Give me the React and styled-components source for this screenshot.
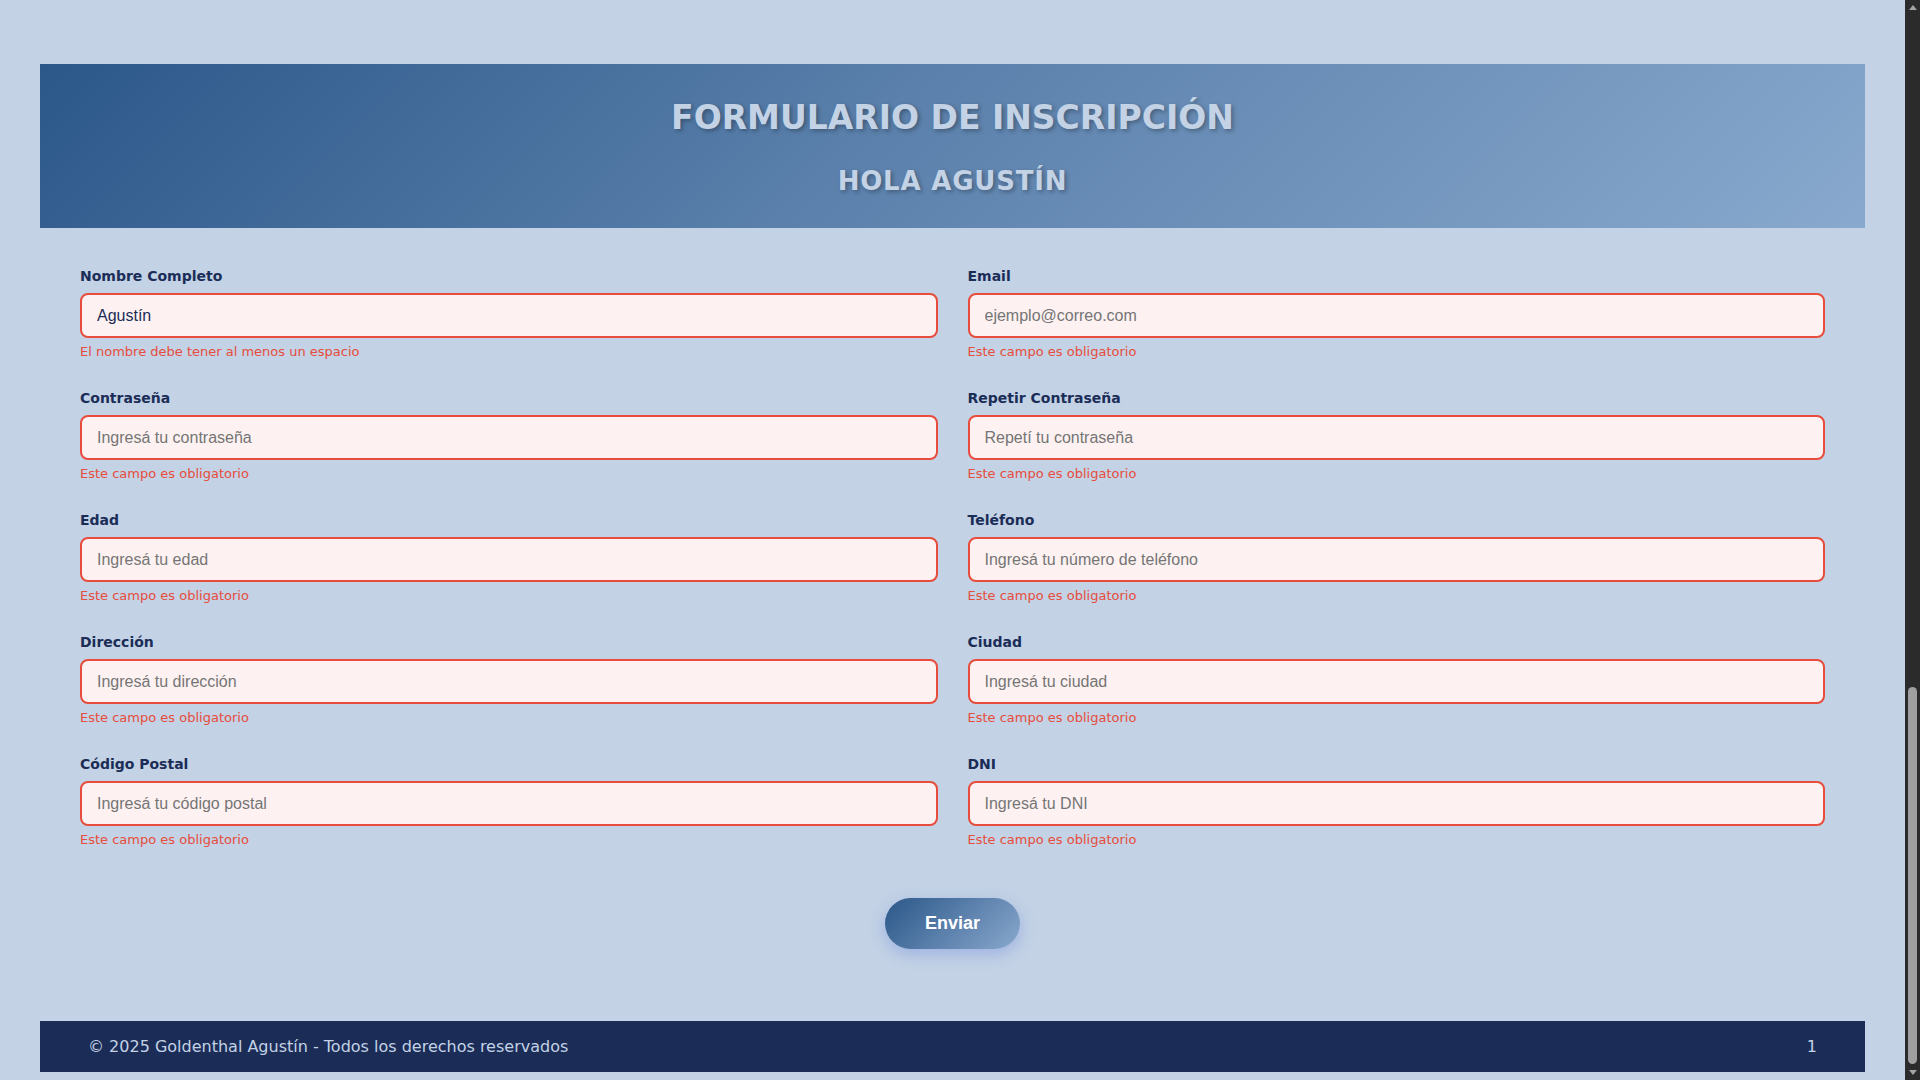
import React, { useState } from "react";
import styled, { createGlobalStyle } from "styled-components";

const GlobalStyle = createGlobalStyle`
  body {
    margin: 0;
    background: #c3d2e5;
    font-family: "DejaVu Sans", Verdana, sans-serif;
    color: #1b2d57;
  }
  * { box-sizing: border-box; }
`;

const Shell = styled.div`
  display: flex;
  height: 100vh;
  background: #c3d2e5;
`;

const Page = styled.div`
  flex: 1;
  min-width: 0;
  display: flex;
  flex-direction: column;
  padding: 64px 40px 8px;
`;

const ScrollRail = styled.div`
  width: 15px;
  flex: none;
  display: flex;
  flex-direction: column;
  align-items: center;
  background: #2b2b2b;
`;

const Arrow = styled.div`
  width: 15px;
  height: 15px;
  flex: none;
  display: flex;
  align-items: center;
  justify-content: center;
  &::before {
    content: "";
    width: 0;
    height: 0;
    border-left: 4px solid transparent;
    border-right: 4px solid transparent;
    ${(p) =>
      p.$down
        ? "border-top: 5px solid #a3a3a3;"
        : "border-bottom: 5px solid #a3a3a3;"}
  }
`;

const Track = styled.div`
  flex: 1;
  width: 100%;
  display: flex;
  flex-direction: column;
  justify-content: flex-end;
  align-items: center;
  padding-bottom: 1px;
`;

const Thumb = styled.div`
  width: 9px;
  height: 377px;
  border-radius: 5px;
  background: #9f9f9f;
`;

const Header = styled.header`
  display: flex;
  flex-direction: column;
  align-items: center;
  gap: 30px;
  padding: 35px 20px 32px;
  background: linear-gradient(135deg, #2b5789 0%, #5a80ab 45%, #89a9ce 100%);
`;

const Title = styled.h1`
  margin: 0;
  font-size: 33px;
  line-height: 38px;
  font-weight: bold;
  color: #c3d2e5;
  text-shadow: 2px 2px 4px rgba(0, 0, 0, 0.3);
`;

const Subtitle = styled.h2`
  margin: 0;
  font-size: 26px;
  line-height: 29px;
  letter-spacing: 0.8px;
  font-weight: bold;
  color: #c3d2e5;
  text-shadow: 2px 2px 4px rgba(0, 0, 0, 0.3);
`;

const Form = styled.form`
  display: flex;
  flex-direction: column;
  padding: 40px 40px 0;
`;

const Grid = styled.div`
  display: grid;
  grid-template-columns: 1fr 1fr;
  column-gap: 30px;
  row-gap: 31px;
`;

const Field = styled.div`
  display: flex;
  flex-direction: column;
`;

const Label = styled.label`
  font-size: 14px;
  line-height: 17px;
  font-weight: bold;
  color: #1b2d57;
  margin-bottom: 8px;
`;

const Input = styled.input`
  height: 45px;
  padding: 0 15px;
  border: 2px solid ${(p) => (p.$invalid ? "#e74c3c" : "#8aa6c8")};
  border-radius: 8px;
  background: ${(p) => (p.$invalid ? "#fdf2f1" : "#ffffff")};
  font-family: "Liberation Sans", Arial, sans-serif;
  font-size: 16px;
  color: #1b2d57;
  outline: none;
  &::placeholder {
    color: #757575;
  }
`;

const ErrorText = styled.span`
  margin-top: 6px;
  font-size: 13px;
  line-height: 15px;
  color: #e74c3c;
`;

const Actions = styled.div`
  display: flex;
  justify-content: center;
  margin-top: 51px;
`;

const SubmitButton = styled.button`
  padding: 15px 40px;
  border: none;
  border-radius: 30px;
  background: linear-gradient(135deg, #2b5789 0%, #89a8cd 100%);
  color: #ffffff;
  font-family: "Liberation Sans", Arial, sans-serif;
  font-size: 18px;
  line-height: 21px;
  font-weight: bold;
  cursor: pointer;
  box-shadow: 0 5px 15px rgba(90, 120, 220, 0.35);
`;

const Footer = styled.footer`
  display: flex;
  justify-content: space-between;
  align-items: center;
  margin-top: 72px;
  padding: 16px 48px;
  background: #1b2d57;
  color: #c3d2e5;
  font-size: 16px;
  line-height: 19px;
`;

const PageNumber = styled.span`
  font-size: 16px;
  color: #c3d2e5;
`;

const fields = [
  { id: "nombre", label: "Nombre Completo", placeholder: "Ingresá tu nombre completo", value: "Agustín", error: "El nombre debe tener al menos un espacio" },
  { id: "email", label: "Email", placeholder: "ejemplo@correo.com", type: "email" },
  { id: "password", label: "Contraseña", placeholder: "Ingresá tu contraseña", type: "password" },
  { id: "password2", label: "Repetir Contraseña", placeholder: "Repetí tu contraseña", type: "password" },
  { id: "edad", label: "Edad", placeholder: "Ingresá tu edad" },
  { id: "telefono", label: "Teléfono", placeholder: "Ingresá tu número de teléfono" },
  { id: "direccion", label: "Dirección", placeholder: "Ingresá tu dirección" },
  { id: "ciudad", label: "Ciudad", placeholder: "Ingresá tu ciudad" },
  { id: "cp", label: "Código Postal", placeholder: "Ingresá tu código postal" },
  { id: "dni", label: "DNI", placeholder: "Ingresá tu DNI" },
];

export default function App() {
  const [values, setValues] = useState(() =>
    Object.fromEntries(fields.map((f) => [f.id, f.value || ""]))
  );

  return (
    <>
      <GlobalStyle />
      <Shell>
        <Page>
          <Header>
            <Title>FORMULARIO DE INSCRIPCIÓN</Title>
            <Subtitle>HOLA AGUSTÍN</Subtitle>
          </Header>
          <Form onSubmit={(e) => e.preventDefault()} noValidate>
            <Grid>
              {fields.map((f) => (
                <Field key={f.id}>
                  <Label htmlFor={f.id}>{f.label}</Label>
                  <Input
                    id={f.id}
                    type={f.type || "text"}
                    placeholder={f.placeholder}
                    value={values[f.id]}
                    $invalid
                    onChange={(e) => setValues({ ...values, [f.id]: e.target.value })}
                  />
                  <ErrorText>{f.error || "Este campo es obligatorio"}</ErrorText>
                </Field>
              ))}
            </Grid>
            <Actions>
              <SubmitButton type="submit">Enviar</SubmitButton>
            </Actions>
          </Form>
          <Footer>
            <span>© 2025 Goldenthal Agustín - Todos los derechos reservados</span>
            <PageNumber>1</PageNumber>
          </Footer>
        </Page>
        <ScrollRail aria-hidden="true">
          <Arrow />
          <Track>
            <Thumb />
          </Track>
          <Arrow $down />
        </ScrollRail>
      </Shell>
    </>
  );
}
